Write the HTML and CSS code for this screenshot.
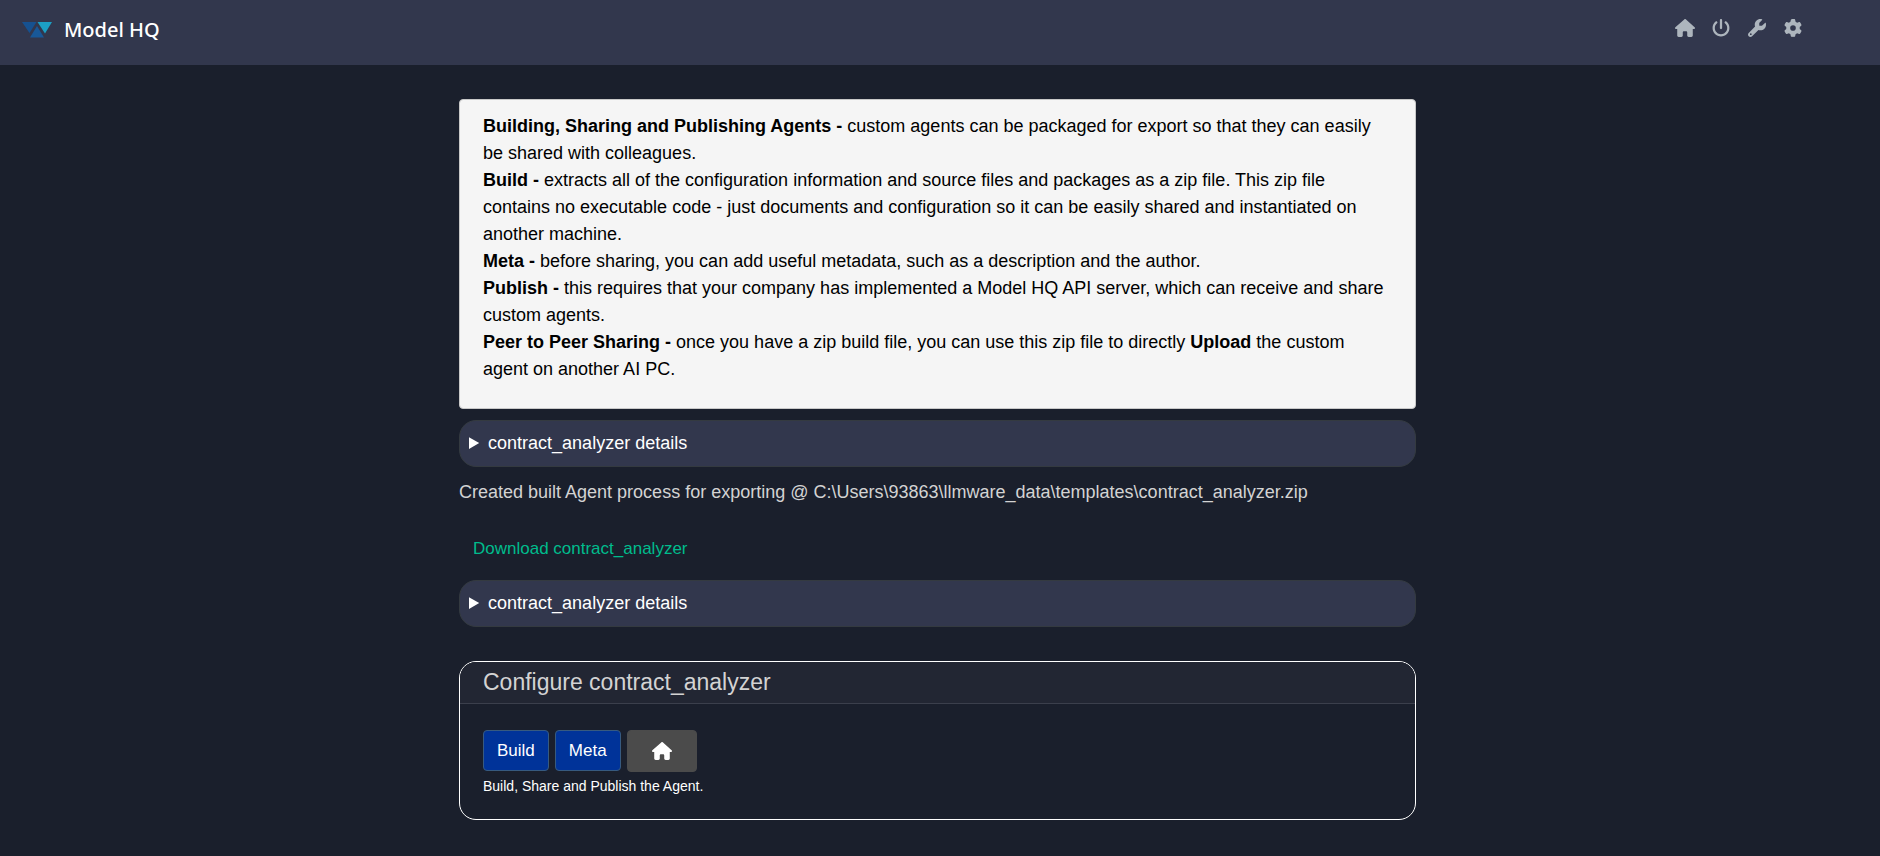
FILE: index.html
```
<!DOCTYPE html>
<html lang="en">
<head>
<meta charset="utf-8">
<meta name="viewport" content="width=device-width, initial-scale=1">
<title>Model HQ</title>
<link rel="stylesheet" href="styles.css">
</head>
<body>
<svg class="sprite" aria-hidden="true">
  <symbol id="house" viewBox="0 0 576 512"><path d="M575.8 255.5c0 18-15 32.1-32 32.1l-32 0 .7 160.2c0 2.7-.2 5.4-.5 8.1l0 16.2c0 22.1-17.9 40-40 40l-16 0c-1.1 0-2.2 0-3.3-.1c-1.4 .1-2.8 .1-4.2 .1L416 512l-24 0c-22.1 0-40-17.9-40-40l0-24 0-64c0-17.7-14.3-32-32-32l-64 0c-17.7 0-32 14.3-32 32l0 64 0 24c0 22.1-17.9 40-40 40l-24 0-31.9 0c-1.5 0-3-.1-4.5-.2c-1.2 .1-2.4 .2-3.6 .2l-16 0c-22.1 0-40-17.9-40-40l0-112c0-.9 0-1.9 .1-2.8l0-69.7-32 0c-18 0-32-14-32-32.1c0-9 3-17 10-24L266.4 8c7-7 15-8 22-8s15 2 21 7L564.8 231.5c8 7 12 15 11 24z"/></symbol>
  <symbol id="power" viewBox="0 0 512 512"><path d="M288 32c0-17.7-14.3-32-32-32s-32 14.3-32 32V256c0 17.7 14.3 32 32 32s32-14.3 32-32V32zM143.5 120.6c13.6-11.3 15.4-31.5 4.1-45.1s-31.5-15.4-45.1-4.1C49.7 115.4 16 181.8 16 256c0 132.5 107.5 240 240 240s240-107.5 240-240c0-74.2-33.8-140.6-86.6-184.6c-13.6-11.3-33.8-9.4-45.1 4.1s-9.4 33.8 4.1 45.1c38.9 32.3 63.5 81 63.5 135.4c0 97.2-78.8 176-176 176s-176-78.8-176-176c0-54.4 24.7-103.1 63.5-135.4z"/></symbol>
  <symbol id="wrench" viewBox="0 0 512 512"><path d="M352 320c88.4 0 160-71.6 160-160c0-15.3-2.2-30.1-6.2-44.2c-3.1-10.8-16.4-13.2-24.3-5.3l-76.8 76.8c-3 3-7.1 4.7-11.3 4.7H336c-8.8 0-16-7.2-16-16V118.6c0-4.2 1.7-8.3 4.7-11.3l76.8-76.8c7.9-7.9 5.4-21.2-5.3-24.3C382.1 2.2 367.3 0 352 0C263.6 0 192 71.6 192 160c0 19.1 3.4 37.5 9.5 54.5L19.9 396.1C7.2 408.8 0 426.1 0 444.1C0 481.6 30.4 512 67.9 512c18 0 35.3-7.2 48-19.9L297.5 310.5c17 6.2 35.4 9.5 54.5 9.5zM80 408a24 24 0 1 1 0 48 24 24 0 1 1 0-48z"/></symbol>
  <symbol id="gear" viewBox="0 0 512 512"><path d="M495.9 166.6c3.2 8.7 .5 18.4-6.4 24.6l-43.3 39.4c1.1 8.3 1.7 16.8 1.7 25.4s-.6 17.1-1.7 25.4l43.3 39.4c6.9 6.2 9.6 15.9 6.4 24.6c-4.4 11.9-9.7 23.3-15.8 34.3l-4.7 8.1c-6.6 11-14 21.4-22.1 31.2c-5.9 7.2-15.7 9.6-24.5 6.8l-55.7-17.7c-13.4 10.3-28.2 18.9-44 25.4l-12.5 57.1c-2 9.1-9 16.3-18.2 17.8c-13.8 2.3-28 3.5-42.5 3.5s-28.7-1.2-42.5-3.5c-9.2-1.5-16.2-8.7-18.2-17.8l-12.5-57.1c-15.8-6.5-30.6-15.1-44-25.4L83.1 425.9c-8.8 2.8-18.6 .3-24.5-6.8c-8.1-9.8-15.5-20.2-22.1-31.2l-4.7-8.1c-6.1-11-11.4-22.4-15.8-34.3c-3.2-8.7-.5-18.4 6.4-24.6l43.3-39.4C64.6 273.1 64 264.6 64 256s.6-17.1 1.7-25.4L22.4 191.2c-6.9-6.2-9.6-15.9-6.4-24.6c4.4-11.9 9.7-23.3 15.8-34.3l4.7-8.1c6.6-11 14-21.4 22.1-31.2c5.9-7.2 15.7-9.6 24.5-6.8l55.7 17.7c13.4-10.3 28.2-18.9 44-25.4l12.5-57.1c2-9.1 9-16.3 18.2-17.8C227.3 1.2 241.5 0 256 0s28.7 1.2 42.5 3.5c9.2 1.5 16.2 8.7 18.2 17.8l12.5 57.1c15.8 6.5 30.6 15.1 44 25.4l55.7-17.7c8.8-2.8 18.6-.3 24.5 6.8c8.1 9.8 15.5 20.2 22.1 31.2l4.7 8.1c6.1 11 11.4 22.4 15.8 34.3zM256 336a80 80 0 1 0 0-160 80 80 0 1 0 0 160z"/></symbol>
</svg>

<header class="navbar">
  <a class="brand" href="#">
    <svg class="logo" viewBox="0 0 30 16" aria-hidden="true">
      <path class="logo-left" d="M0 0h14.500l-7 11z"/>
      <path class="logo-mid" d="M15 4l7 11.500h-14z"/>
      <path class="logo-right" d="M15.500 0h14.500l-7 11.500z"/>
    </svg>
    <span>Model HQ</span>
  </a>
  <nav class="nav-links" aria-label="Main">
    <a href="#" aria-label="Home"><svg class="icon"><use href="#house"/></svg></a>
    <a href="#" aria-label="Power"><svg class="icon"><use href="#power"/></svg></a>
    <a href="#" aria-label="Tools"><svg class="icon"><use href="#wrench"/></svg></a>
    <a href="#" aria-label="Settings"><svg class="icon"><use href="#gear"/></svg></a>
  </nav>
</header>

<main class="page">
  <section class="info">
    <p><b>Building, Sharing and Publishing Agents -</b> custom agents can be packaged for export so that they can easily be shared with colleagues.</p>
    <p><b>Build -</b> extracts all of the configuration information and source files and packages as a zip file. This zip file contains no executable code - just documents and configuration so it can be easily shared and instantiated on another machine.</p>
    <p><b>Meta -</b> before sharing, you can add useful metadata, such as a description and the author.</p>
    <p><b>Publish -</b> this requires that your company has implemented a Model HQ API server, which can receive and share custom agents.</p>
    <p><b>Peer to Peer Sharing -</b> once you have a zip build file, you can use this zip file to directly <b>Upload</b> the custom agent on another AI PC.</p>
  </section>

  <details class="details">
    <summary>contract_analyzer details</summary>
  </details>

  <p class="status">Created built Agent process for exporting @ C:\Users\93863\llmware_data\templates\contract_analyzer.zip</p>
  <a class="download" href="#">Download contract_analyzer</a>

  <details class="details">
    <summary>contract_analyzer details</summary>
  </details>

  <section class="card">
    <h1 class="card-header">Configure contract_analyzer</h1>
    <div class="card-body">
      <div class="actions">
        <button class="btn btn-primary" type="button">Build</button>
        <button class="btn btn-primary" type="button">Meta</button>
        <button class="btn btn-home" type="button" aria-label="Home"><svg class="icon"><use href="#house"/></svg></button>
      </div>
      <p class="caption">Build, Share and Publish the Agent.</p>
    </div>
  </section>
</main>
</body>
</html>
```
FILE: styles.css
```
* {
  box-sizing: border-box;
}

body {
  margin: 0;
  min-height: 100vh;
  background: #1a1f2c;
  color: #d3d3d3;
  font: 18px/27px "Liberation Sans", Arial, sans-serif;
}

p,
h1 {
  margin: 0;
}

a {
  text-decoration: none;
}

.sprite {
  display: none;
}

.icon {
  display: block;
  width: 20px;
  height: 18px;
  fill: currentColor;
}

.navbar {
  display: flex;
  justify-content: space-between;
  align-items: flex-start;
  height: 65px;
  padding: 16px 77px 0 22px;
  background: #32374d;
}

.brand {
  display: flex;
  align-items: center;
  gap: 12px;
  color: #fff;
  font: 500 20px/27px "Segoe UI", "Noto Sans", sans-serif;
}

.logo {
  width: 30px;
  height: 16px;
}

.logo-left {
  fill: #165190;
}

.logo-mid {
  fill: #185898;
}

.logo-right {
  fill: #1c9fc4;
}

.nav-links {
  display: flex;
  gap: 16px;
  padding-top: 3px;
}

.nav-links a {
  color: #adb5bd;
}

.page {
  max-width: 962px;
  margin: 0 auto;
  padding: 34px 5px 36px 0;
}

.info {
  margin-bottom: 11px;
  padding: 13px 23px 25px;
  border: 1px solid #c8c8c8;
  border-radius: 4px;
  background: #f5f5f5;
  color: #000;
}

.details {
  padding: 9px;
  border: 1px solid #343a40;
  border-radius: 17px;
  background: #32374d;
  color: #fff;
}

.status {
  margin: 12px 0 29px;
}

.download {
  display: block;
  width: fit-content;
  margin: 0 0 18px 14px;
  color: #00bc8c;
  font-size: 17px;
}

.card {
  margin-top: 34px;
  border: 1px solid #fff;
  border-radius: 17px;
  overflow: hidden;
}

.card-header {
  padding: 6px 23px 7px;
  border-bottom: 1px solid #3b3f4c;
  background: #222633;
  font-size: 23px;
  font-weight: 400;
  line-height: 28px;
}

.card-body {
  padding: 26px 23px 21px;
  color: #fff;
}

.actions {
  display: flex;
  align-items: flex-start;
  gap: 6px;
}

.btn {
  height: 41px;
  padding: 0 13px;
  border: 1px solid #375a7f;
  border-radius: 4px;
  color: #fff;
  font: inherit;
  font-size: 17px;
}

.btn-primary {
  background: #003399;
}

.btn-home {
  height: 42px;
  padding: 0 24px;
  border-color: #4b4b4b;
  background: #4b4b4b;
}

.caption {
  margin-top: 2px;
  font-size: 14px;
  line-height: 24px;
}
```
